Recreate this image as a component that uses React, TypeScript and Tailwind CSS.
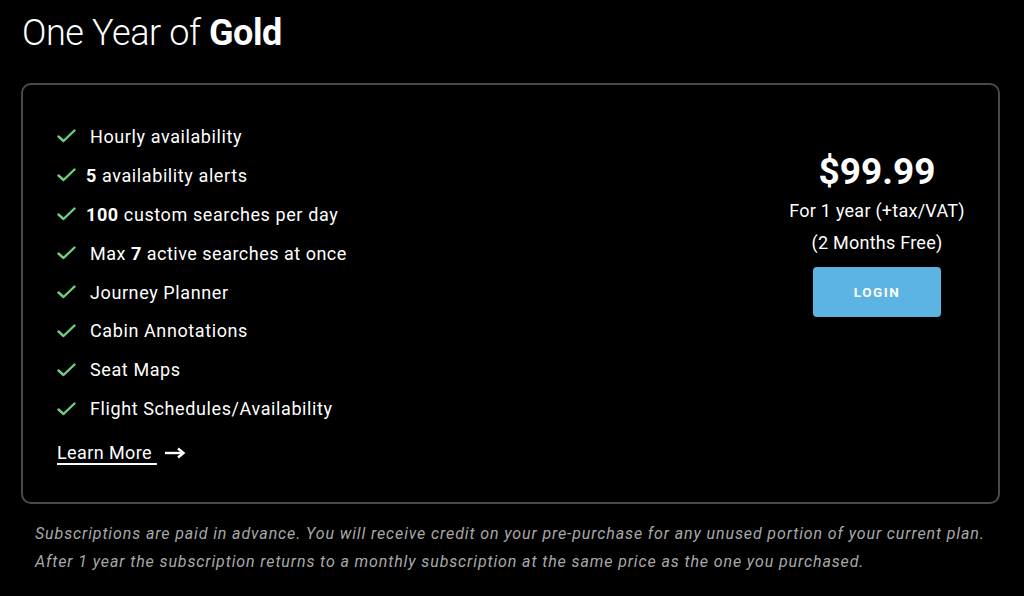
import React from "react";

const Check = () => (
  <svg width="19" height="14" viewBox="0 0 19 14" fill="none" className="shrink-0">
    <path d="M1.5 7.5 L6.5 12 L17.5 1.5" stroke="#6fcf7f" strokeWidth="2.4" strokeLinecap="round" strokeLinejoin="round" />
  </svg>
);

export default function App() {
  return (
    <div
      className="w-[1024px] h-[596px] bg-black text-white overflow-hidden"
      style={{ fontFamily: "Roboto, 'Liberation Sans', sans-serif" }}
    >
      <div className="pl-[22px] pt-[11px]">
        <h1 className="text-[36px] leading-[44px] font-light tracking-[-0.4px]">
          One Year of <span className="font-bold">Gold</span>
        </h1>
      </div>
      <div className="ml-[21px] mr-[24px] mt-[28px] h-[421px] border-2 border-[#4a4a4a] rounded-[10px] flex">
        <div className="flex-1 pl-[34px] pt-[32px] tracking-[0.6px]">
          <ul className="flex flex-col">
            <li className="h-[38.9px] flex items-center gap-[14px] text-[18px]">
              <Check />
              <span>Hourly availability</span>
            </li>
            <li className="h-[38.9px] flex items-center gap-[10px] text-[18px]">
              <Check />
              <span>
                <b className="font-bold">5</b> availability alerts
              </span>
            </li>
            <li className="h-[38.9px] flex items-center gap-[10px] text-[18px]">
              <Check />
              <span>
                <b className="font-bold">100</b> custom searches per day
              </span>
            </li>
            <li className="h-[38.9px] flex items-center gap-[14px] text-[18px]">
              <Check />
              <span className="tracking-[0.5px]">
                Max <b className="font-bold">7</b> active searches at once
              </span>
            </li>
            {["Journey Planner", "Cabin Annotations", "Seat Maps", "Flight Schedules/Availability"].map((t) => (
              <li key={t} className="h-[38.9px] flex items-center gap-[14px] text-[18px]">
                <Check />
                <span>{t}</span>
              </li>
            ))}
          </ul>
          <a href="#" className="mt-[11px] inline-flex items-center text-[18px] leading-[28px]">
            <span className="underline underline-offset-[4px] decoration-[1.5px] tracking-[0.4px]">Learn More&nbsp;</span>
            <svg width="22" height="12" viewBox="0 0 22 12" className="ml-[7px]" fill="none">
              <path d="M1 6 H19" stroke="white" strokeWidth="2.4" />
              <path d="M14 1.5 L19.5 6 L14 10.5" stroke="white" strokeWidth="2.4" strokeLinejoin="miter" />
            </svg>
          </a>
        </div>
        <div className="w-[244px] pl-[2px] flex flex-col items-center pt-[65px]">
          <div className="text-[37px] leading-[44px] font-bold">$99.99</div>
          <div className="text-[18px] leading-[30px] mt-[2px] tracking-[0.25px]">For 1 year (+tax/VAT)</div>
          <div className="text-[18px] leading-[30px] mt-[2px] tracking-[0.25px]">(2 Months Free)</div>
          <button className="mt-[9px] w-[128px] h-[50px] rounded-[4px] bg-[#5bb4e4] text-white text-[13.5px] font-bold tracking-[1.5px]">
            LOGIN
          </button>
        </div>
      </div>
      <div className="pl-[35px] pt-[16px] text-[16px] leading-[28px] italic text-[#a8a8a8] tracking-[0.88px]">
        <p>Subscriptions are paid in advance. You will receive credit on your pre-purchase for any unused portion of your current plan.</p>
        <p>After 1 year the subscription returns to a monthly subscription at the same price as the one you purchased.</p>
      </div>
    </div>
  );
}
